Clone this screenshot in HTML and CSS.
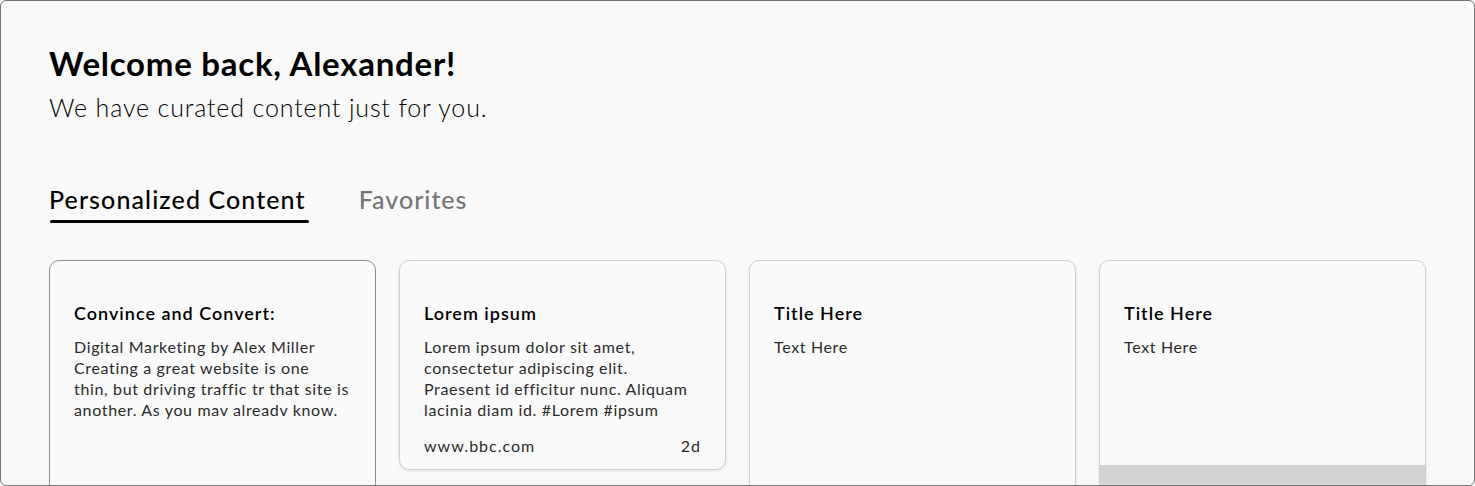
FILE: index.html
```html
<!DOCTYPE html>
<html lang="en">
<head>
<meta charset="utf-8">
<title>Welcome back</title>
<link rel="stylesheet" href="styles.css">
</head>
<body>
<div class="frame">
  <header class="intro">
    <h1 class="title">Welcome back, Alexander!</h1>
    <p class="subtitle">We have curated content just for you.</p>
  </header>
  <nav class="tabs">
    <span class="tab tab-active">Personalized Content</span>
    <span class="tab">Favorites</span>
  </nav>
  <section class="cards">
    <article class="card card-selected">
      <h2 class="card-title">Convince and Convert:</h2>
      <p class="card-text">Digital Marketing by Alex Miller<br>Creating a great website is one<br>thin, but driving traffic tr that site is<br>another. As you mav alreadv know.</p>
    </article>
    <article class="card card-short">
      <h2 class="card-title">Lorem ipsum</h2>
      <p class="card-text">Lorem ipsum dolor sit amet,<br>consectetur adipiscing elit.<br>Praesent id efficitur nunc. Aliquam<br>lacinia diam id. #Lorem #ipsum</p>
      <div class="card-meta"><span>www.bbc.com</span><span>2d</span></div>
    </article>
    <article class="card">
      <h2 class="card-title">Title Here</h2>
      <p class="card-text">Text Here</p>
    </article>
    <article class="card">
      <h2 class="card-title">Title Here</h2>
      <p class="card-text">Text Here</p>
      <div class="card-image"></div>
    </article>
  </section>
</div>
</body>
</html>
```
FILE: styles.css
```css
* { box-sizing: border-box; }
html, body { margin: 0; padding: 0; background: #ffffff; }
body { font-family: Lato, "Open Sans", sans-serif; color: #111; }

.frame {
  width: 1475px;
  height: 486px;
  border: 1px solid #777;
  border-radius: 6px;
  background: #f9f9f9;
  overflow: hidden;
  padding: 42px 47px 0 48px;
}

.intro { margin: 0; }
.title {
  margin: 0;
  font-size: 33px;
  line-height: 40px;
  font-weight: 700;
  letter-spacing: 0.75px;
  color: #000;
}
.subtitle {
  margin: 8px 0 0;
  font-size: 25px;
  line-height: 32px;
  font-weight: 300;
  letter-spacing: 0.85px;
  color: #000;
}

.tabs {
  display: flex;
  gap: 53px;
  margin-top: 60px;
}
.tab {
  font-size: 25px;
  line-height: 32px;
  font-weight: 500;
  letter-spacing: 1.1px;
  color: #757575;
  padding-bottom: 8px;
}
.tab:last-child { letter-spacing: 1px; }
.tab-active {
  color: #000;
  position: relative;
}
.tab-active::after {
  content: "";
  position: absolute;
  left: 1px;
  right: -3px;
  bottom: 0;
  height: 3px;
  border-radius: 2px;
  background: #000;
}

.cards {
  display: grid;
  grid-template-columns: repeat(4, 327px);
  gap: 23px;
  margin-top: 37px;
  align-items: start;
}
.card {
  display: flex;
  flex-direction: column;
  height: 280px;
  background: #fafafa;
  border: 1px solid #cfcfcf;
  border-radius: 10px;
  box-shadow: 0 1px 3px rgba(0,0,0,0.10);
  padding: 40px 24px 0;
  overflow: hidden;
}
.card-selected { border-color: #8e8e8e; box-shadow: none; }
.card-short { height: 210px; padding-bottom: 12px; }

.card-title {
  margin: 0;
  font-size: 18px;
  line-height: 24px;
  font-weight: 600;
  letter-spacing: 1px;
  color: #000;
}
.card-text {
  margin: 11px 0 0;
  font-size: 16px;
  line-height: 21px;
  font-weight: 400;
  letter-spacing: 0.65px;
  white-space: nowrap;
  color: #2a2a2a;
}
.card-meta {
  display: flex;
  justify-content: space-between;
  margin-top: 15px;
  font-size: 16px;
  line-height: 21px;
  font-weight: 400;
  letter-spacing: 1px;
  color: #2a2a2a;
}
.card-image {
  margin: auto -24px 0;
  height: 74px;
  background: #d4d4d4;
}
```
